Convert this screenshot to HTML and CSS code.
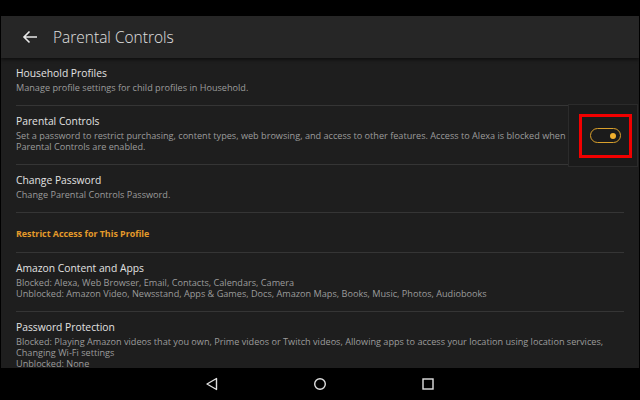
FILE: index.html
```html
<html>
<head>
<link rel="stylesheet" href="styles.css">
<title>Parental Controls</title>
</head>
<body>
	<div class="status"></div>
	<div class="app">
		<div class="header">
			<svg class="back" width="16" height="14" viewBox="0 0 16 14">
				<path d="M15 7H2M7.5 1.5L2 7l5.5 5.5" fill="none" stroke="#e8e8e8" stroke-width="1.6"/>
			</svg>
			<span class="title">Parental Controls</span>
		</div>
		<div class="content">
			<div class="row">
				<div class="row-title">Household Profiles</div>
				<div class="row-sub">Manage profile settings for child profiles in Household.</div>
			</div>
			<div class="row row-toggle">
				<div class="row-text">
					<div class="row-title">Parental Controls</div>
					<div class="row-sub">Set a password to restrict purchasing, content types, web browsing, and access to other features. Access to Alexa is blocked when<br>Parental Controls are enabled.</div>
				</div>
				<div class="toggle-cell">
					<div class="highlight">
						<div class="toggle"><span class="knob"></span></div>
					</div>
				</div>
			</div>
			<div class="row">
				<div class="row-title">Change Password</div>
				<div class="row-sub">Change Parental Controls Password.</div>
			</div>
			<div class="section">Restrict Access for This Profile</div>
			<div class="row">
				<div class="row-title">Amazon Content and Apps</div>
				<div class="row-sub">Blocked: Alexa, Web Browser, Email, Contacts, Calendars, Camera<br>Unblocked: Amazon Video, Newsstand, Apps &amp; Games, Docs, Amazon Maps, Books, Music, Photos, Audiobooks</div>
			</div>
			<div class="row">
				<div class="row-title">Password Protection</div>
				<div class="row-sub">Blocked: Playing Amazon videos that you own, Prime videos or Twitch videos, Allowing apps to access your location using location services,<br>Changing Wi-Fi settings<br>Unblocked: None</div>
			</div>
		</div>
	</div>
	<div class="navbar">
		<svg width="14" height="14" viewBox="0 0 14 14"><path d="M11.5 1.5v11L2 7z" fill="none" stroke="#e0e0e0" stroke-width="1.4" stroke-linejoin="round"/></svg>
		<svg width="14" height="14" viewBox="0 0 14 14"><circle cx="7" cy="7" r="5.3" fill="none" stroke="#e0e0e0" stroke-width="1.4"/></svg>
		<svg width="14" height="14" viewBox="0 0 14 14"><rect x="2" y="2" width="10" height="10" fill="none" stroke="#e0e0e0" stroke-width="1.4"/></svg>
	</div>
</body>
</html>
```

FILE: styles.css
```css
* {
  margin: 0;
  padding: 0;
  box-sizing: border-box;
}

body {
  font-family: "Open Sans", sans-serif;
  background: #000;
  width: 640px;
  height: 400px;
  overflow: hidden;
}

.status {
  height: 16px;
}

.app {
  margin: 0 1px;
  height: 352px;
  background: #1e1e1e;
  display: flex;
  flex-direction: column;
  overflow: hidden;
}

.header {
  height: 42px;
  flex-shrink: 0;
  background: #262626;
  display: flex;
  align-items: center;
  padding-left: 21px;
  box-shadow: 0 2px 3px rgba(0, 0, 0, 0.5);
  position: relative;
  z-index: 1;
}

.back {
  margin-right: 15px;
}

.title {
  font-size: 15.5px;
  font-weight: 300;
  color: #e0e0e0;
}

.content {
  padding: 0 15px;
  flex: 1;
  overflow: hidden;
}

.row {
  padding: 8px 0 12px;
  border-top: 1px solid #353535;
}

.row:first-child {
  border-top: none;
}

.row-title {
  font-size: 10.3px;
  line-height: 14px;
  color: #e2e2e2;
}

.row-sub {
  margin-top: 2px;
  font-size: 9.15px;
  line-height: 11px;
  color: #9c9c9c;
  white-space: nowrap;
}

.row-toggle {
  display: flex;
  padding: 0;
  margin-right: -14px;
}

.row-text {
  flex: 1;
  padding: 8px 0 12px;
}

.toggle-cell {
  width: 70px;
  margin: -2px 0 -3px;
  background: #1b1b1b;
  border: 1px solid #2b2b2b;
  display: flex;
  align-items: center;
  justify-content: center;
  padding-left: 5px;
}

.highlight {
  width: 53px;
  height: 44px;
  border: 3px solid #f20000;
  display: flex;
  align-items: center;
  justify-content: center;
}

.toggle {
  width: 31px;
  height: 15px;
  border: 1.5px solid #d9a02c;
  border-radius: 8px;
  display: flex;
  align-items: center;
  justify-content: flex-end;
  padding-right: 4px;
}

.knob {
  width: 6px;
  height: 6px;
  border-radius: 50%;
  background: #f0b02e;
}

.section {
  border-top: 1px solid #353535;
  padding: 15px 0 12px;
  font-size: 8.9px;
  line-height: 12px;
  font-weight: bold;
  color: #e49a2a;
}

.navbar {
  height: 32px;
  display: flex;
  align-items: center;
  justify-content: center;
  gap: 94px;
}
```
